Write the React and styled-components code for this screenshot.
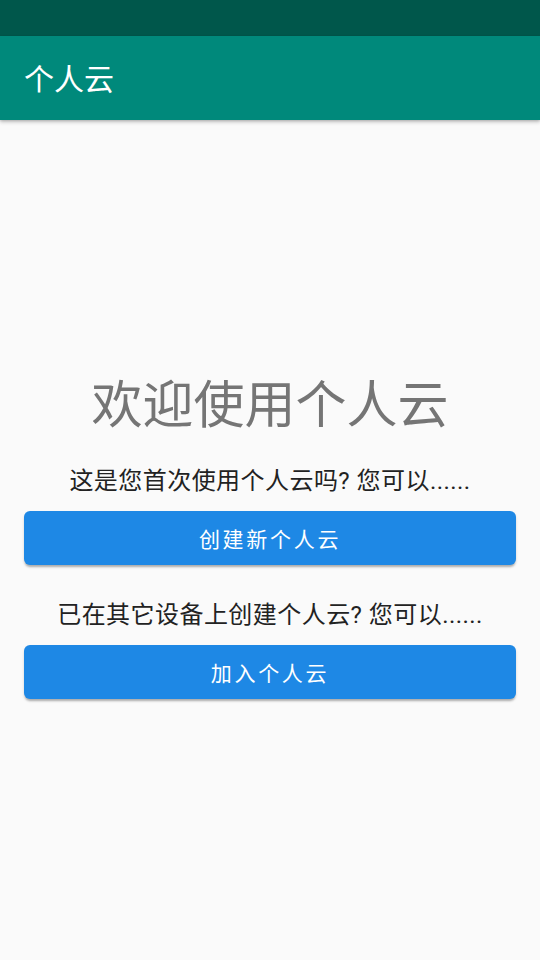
import React from "react";
import styled, { createGlobalStyle } from "styled-components";

const GlobalStyle = createGlobalStyle`
    html, body {
        margin: 0;
        padding: 0;
        background: #fafafa;
    }
    body {
        font-family: Roboto, "Noto Sans CJK SC", sans-serif;
    }
    #root {
        min-height: 100vh;
    }
`;

const Screen = styled.div`
    display: flex;
    flex-direction: column;
    width: 540px;
    height: 960px;
    background-color: #fafafa;
    overflow: hidden;
`;

const StatusBar = styled.div`
    height: 36px;
    flex-shrink: 0;
    background-color: #00574b;
`;

const AppBar = styled.header`
    display: flex;
    align-items: center;
    height: 84px;
    flex-shrink: 0;
    padding: 0 24px 2px;
    box-sizing: border-box;
    background-color: #00897b;
    box-shadow: 0 2px 4px rgba(0, 0, 0, 0.22), 0 1px 2px rgba(0, 0, 0, 0.12);
    position: relative;
    z-index: 1;

    .app-bar__title {
        margin: 0;
        font-size: 30px;
        font-weight: 400;
        color: #ffffff;
    }
`;

const Content = styled.main`
    flex: 1;
    display: flex;
    flex-direction: column;
    justify-content: center;
    padding: 0 24px 5px;
`;

const Heading = styled.h1`
    margin: 0;
    font-size: 51px;
    line-height: 60px;
    font-weight: 400;
    text-align: center;
    color: #757575;
`;

const Prompt = styled.p`
    margin: ${(props) => props.$top}px 0 0;
    font-size: 24px;
    line-height: 32px;
    letter-spacing: 0.45px;
    text-align: center;
    color: #222222;
`;

const ActionButton = styled.button`
    display: block;
    width: 100%;
    height: 54px;
    margin-top: 14px;
    border: none;
    border-radius: 6px;
    background-color: #1e88e5;
    color: #ffffff;
    font-family: Roboto, "Noto Sans CJK SC", sans-serif;
    font-size: 21px;
    letter-spacing: 2.7px;
    box-shadow: 0 3px 2px -1px rgba(0, 0, 0, 0.2), 0 2px 3px rgba(0, 0, 0, 0.14);
    cursor: pointer;
`;

const App = () => {
    return (
        <Screen>
            <GlobalStyle />
            <StatusBar />
            <AppBar>
                <h2 className="app-bar__title">个人云</h2>
            </AppBar>
            <Content>
                <Heading>欢迎使用个人云</Heading>
                <Prompt $top={29}>这是您首次使用个人云吗? 您可以......</Prompt>
                <ActionButton>创建新个人云</ActionButton>
                <Prompt $top={34}>已在其它设备上创建个人云? 您可以......</Prompt>
                <ActionButton>加入个人云</ActionButton>
            </Content>
        </Screen>
    );
};

export default App;
